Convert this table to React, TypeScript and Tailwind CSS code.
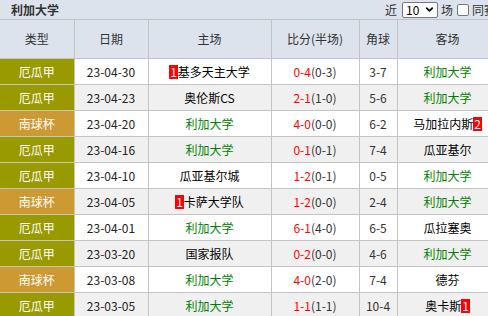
// App.tsx
// Recent matches table — 利加大学

import { ChevronDown } from 'lucide-react';

type Row = {
  type: '厄瓜甲' | '南球杯';
  date: string;
  home: string;
  homeGreen?: boolean;
  homeBadge?: string;
  score: string;
  half: string;
  corner: string;
  away: string;
  awayGreen?: boolean;
  awayBadge?: string;
};

const rows: Row[] = [
  { type: '厄瓜甲', date: '23-04-30', home: '基多天主大学', homeBadge: '1', score: '0-4', half: '(0-3)', corner: '3-7', away: '利加大学', awayGreen: true },
  { type: '厄瓜甲', date: '23-04-23', home: '奥伦斯CS', score: '2-1', half: '(1-0)', corner: '5-6', away: '利加大学', awayGreen: true },
  { type: '南球杯', date: '23-04-20', home: '利加大学', homeGreen: true, score: '4-0', half: '(0-0)', corner: '6-2', away: '马加拉内斯', awayBadge: '2' },
  { type: '厄瓜甲', date: '23-04-16', home: '利加大学', homeGreen: true, score: '0-1', half: '(0-1)', corner: '7-4', away: '瓜亚基尔' },
  { type: '厄瓜甲', date: '23-04-10', home: '瓜亚基尔城', score: '1-2', half: '(0-1)', corner: '0-5', away: '利加大学', awayGreen: true },
  { type: '南球杯', date: '23-04-05', home: '卡萨大学队', homeBadge: '1', score: '1-2', half: '(0-0)', corner: '2-4', away: '利加大学', awayGreen: true },
  { type: '厄瓜甲', date: '23-04-01', home: '利加大学', homeGreen: true, score: '6-1', half: '(4-0)', corner: '6-5', away: '瓜拉塞奥' },
  { type: '厄瓜甲', date: '23-03-20', home: '国家报队', score: '0-2', half: '(0-0)', corner: '4-6', away: '利加大学', awayGreen: true },
  { type: '南球杯', date: '23-03-08', home: '利加大学', homeGreen: true, score: '4-0', half: '(2-0)', corner: '7-4', away: '德芬' },
  { type: '厄瓜甲', date: '23-03-05', home: '利加大学', homeGreen: true, score: '1-1', half: '(1-1)', corner: '10-4', away: '奥卡斯', awayBadge: '1' },
];

const font = { fontFamily: '"Noto Sans CJK SC", "Liberation Sans", sans-serif' };

function Badge({ n }: { n: string }) {
  return <span className="inline-block bg-[#ff0000] px-[1px] text-[12px] leading-[14px] text-white">{n}</span>;
}

const cell = 'border border-[#c4c4c4] text-center p-0';

export default function App() {
  return (
    <div className="h-[316px] w-[488px] overflow-hidden bg-white text-[12px] text-[#333]" style={font}>
      <div className="w-[512px]">
        {/* title bar */}
        <div className="flex h-[19px] items-center bg-[#dce3ed] pl-[11px] pr-[4px]">
          <span className="font-bold text-[12px] text-[#333]">利加大学</span>
          <div className="ml-auto flex items-center text-[12px] text-[#333]">
            <span>近</span>
            <div className="ml-[5px] flex h-[16px] w-[36px] items-center justify-between rounded-[2px] border border-[#767676] bg-white pl-[3px] pr-[2px] text-[12px] text-black">
              <span>10</span>
              <ChevronDown size={11} strokeWidth={3.5} />
            </div>
            <span className="ml-[3px]">场</span>
            <span className="ml-[4px] h-[12px] w-[12px] rounded-[2px] border border-[#767676] bg-white" />
            <span className="ml-[3px]">同赛事</span>
          </div>
        </div>

        <table className="w-[498px] table-fixed border-collapse">
          <colgroup>
            <col className="w-[74px]" />
            <col className="w-[74px]" />
            <col className="w-[123px]" />
            <col className="w-[88px]" />
            <col className="w-[38px]" />
            <col className="w-[101px]" />
          </colgroup>
          <thead>
            <tr className="h-[39px] bg-[#dce3ed] font-normal text-[#333]">
              <th className={`${cell} border-l-0 font-normal`}>类型</th>
              <th className={`${cell} font-normal`}>日期</th>
              <th className={`${cell} font-normal`}>主场</th>
              <th className={`${cell} font-normal`}>比分(半场)</th>
              <th className={`${cell} font-normal`}>角球</th>
              <th className={`${cell} font-normal`}>客场</th>
            </tr>
          </thead>
          <tbody>
            {rows.map((r, i) => (
              <tr key={r.date} className={`h-[26px] ${i % 2 === 1 ? 'bg-[#f0f0f0]' : 'bg-white'}`}>
                <td className={`${cell} border-l-0 text-white ${r.type === '南球杯' ? 'bg-[#cc9933]' : 'bg-[#999900]'}`}>
                  {r.type}
                </td>
                <td className={`${cell} text-[#222]`}>{r.date}</td>
                <td className={`${cell} ${r.homeGreen ? 'text-[#008000]' : 'text-black'}`}>
                  {r.homeBadge && <Badge n={r.homeBadge} />}
                  {r.home}
                </td>
                <td className={`${cell} text-[#333]`}>
                  <span className="text-[#ff0000]">{r.score}</span>
                  {r.half}
                </td>
                <td className={`${cell} text-[#333]`}>{r.corner}</td>
                <td className={`${cell} ${r.awayGreen ? 'text-[#008000]' : 'text-black'}`}>
                  {r.away}
                  {r.awayBadge && <Badge n={r.awayBadge} />}
                </td>
              </tr>
            ))}
          </tbody>
        </table>
      </div>
    </div>
  );
}
